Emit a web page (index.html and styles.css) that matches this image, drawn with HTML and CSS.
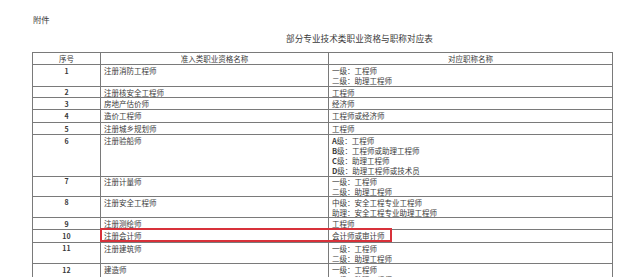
FILE: index.html
```html
<!DOCTYPE html>
<html lang="zh">
<head>
<meta charset="utf-8">
<link rel="stylesheet" href="styles.css">
</head>
<body>
<div class="page">
  <div class="annex">附件</div>
  <div class="title">部分专业技术类职业资格与职称对应表</div>
  <div class="table-wrap">
    <table class="grid">
      <colgroup>
        <col class="c-no">
        <col class="c-qual">
        <col class="c-title">
      </colgroup>
      <thead>
        <tr><th>序号</th><th>准入类职业资格名称</th><th>对应职称名称</th></tr>
      </thead>
      <tbody>
        <tr><td class="no">1</td><td>注册消防工程师</td><td>一级：工程师<br>二级：助理工程师</td></tr>
        <tr class="short"><td class="no">2</td><td>注册核安全工程师</td><td>工程师</td></tr>
        <tr><td class="no">3</td><td>房地产估价师</td><td>经济师</td></tr>
        <tr class="tall"><td class="no">4</td><td>造价工程师</td><td>工程师或经济师</td></tr>
        <tr><td class="no">5</td><td>注册城乡规划师</td><td>工程师</td></tr>
        <tr><td class="no">6</td><td>注册验船师</td><td><b>A</b>级：工程师<br><b>B</b>级：工程师或助理工程师<br><b>C</b>级：助理工程师<br><b>D</b>级：助理工程师或技术员</td></tr>
        <tr class="two-s"><td class="no">7</td><td>注册计量师</td><td>一级：工程师<br>二级：助理工程师</td></tr>
        <tr class="two-m"><td class="no">8</td><td>注册安全工程师</td><td>中级：安全工程专业工程师<br>助理：安全工程专业助理工程师</td></tr>
        <tr><td class="no">9</td><td>注册测绘师</td><td>工程师</td></tr>
        <tr class="tall"><td class="no">10</td><td>注册会计师</td><td>会计师或审计师</td></tr>
        <tr class="two-m"><td class="no">11</td><td>注册建筑师</td><td>一级：工程师<br>二级：助理工程师</td></tr>
        <tr><td class="no">12</td><td>建造师</td><td>一级：工程师<br>二级：助理工程师</td></tr>
      </tbody>
    </table>
    <div class="highlight"></div>
  </div>
</div>
</body>
</html>
```

FILE: styles.css
```css
html, body {
  margin: 0;
  padding: 0;
  background: #ffffff;
  width: 640px;
  height: 277px;
  overflow: hidden;
}

.page {
  padding-left: 32px;
  font-family: "Noto Sans CJK SC", "Liberation Sans", sans-serif;
  color: #3a3a3a;
}

.annex {
  padding-top: 14px;
  padding-left: 1px;
  font-size: 8.4px;
  line-height: 10px;
  height: 10px;
}

.title {
  margin-top: 9px;
  margin-left: 254px;
  font-size: 8.6px;
  line-height: 10px;
  height: 10px;
  letter-spacing: 0.05px;
}

.table-wrap {
  position: relative;
  margin-top: 9px;
  width: 580px;
}

.grid {
  border-collapse: collapse;
  table-layout: fixed;
  width: 580px;
  font-size: 7.5px;
  line-height: 10px;
}

.c-no { width: 68px; }
.c-qual { width: 228px; }
.c-title { width: 284px; }

.grid th,
.grid td {
  border: 1px solid #7a7a7a;
  padding: 1px 3px 0 3px;
  vertical-align: top;
  text-align: left;
  white-space: nowrap;
}

.grid th {
  font-weight: normal;
  text-align: center;
  height: 10px;
}

.grid td {
  height: 10px;
}

.grid td.no {
  text-align: center;
  font-weight: bold;
  font-size: 7px;
}

.grid td b {
  font-weight: bold;
}

.grid tr.short td { height: 9px; line-height: 9px; }
.grid tr.tall td { height: 11px; }
.grid tr.two-s td { height: 19px; line-height: 9.5px; padding-top: 0; }
.grid tr.two-m td { height: 19px; line-height: 9.5px; }

.highlight {
  position: absolute;
  left: 68px;
  top: 176px;
  width: 288px;
  height: 10px;
  border: 2px solid #d8313a;
}
```
